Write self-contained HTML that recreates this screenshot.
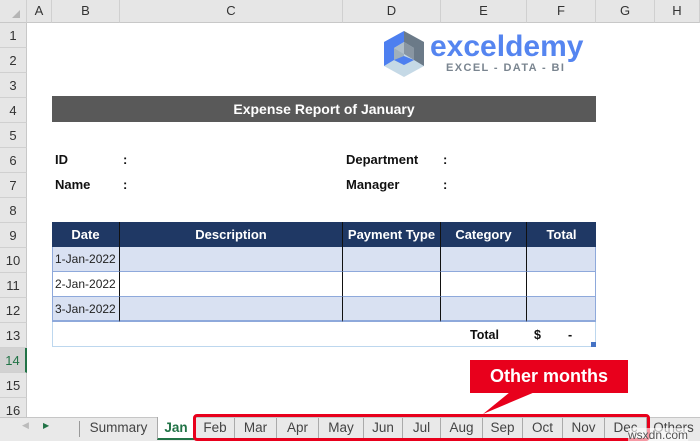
<!DOCTYPE html>
<html><head><meta charset="utf-8"><style>
*{margin:0;padding:0;box-sizing:border-box}
body{width:700px;height:441px;overflow:hidden;background:#fff;font-family:"Liberation Sans",Arial,sans-serif;position:relative}
.a{position:absolute}
.ch{top:0;height:23px;background:#e6e6e6;border-bottom:1px solid #c8c8c8;border-right:1px solid #d0d0d0;font-size:13px;color:#333;text-align:center;line-height:22px}
.rh{left:0;width:27px;height:25px;background:#e6e6e6;border-bottom:1px solid #d0d0d0;border-right:1px solid #c8c8c8;font-size:13px;color:#333;text-align:center;line-height:26px}
.b{font-weight:bold;font-size:13px;color:#111}
.cell{border-right:1px solid #111;border-bottom:1px solid #8ea9db;height:25px;font-size:12px;line-height:25px;padding-left:3px;color:#222}
.hd{color:#fff;font-weight:bold;font-size:13px;text-align:center;line-height:25px;height:25px;border-right:1px solid #111}
.tab{top:418px;height:23px;font-size:13.5px;color:#444;text-align:center;line-height:20px;border-left:1px solid #aaa}
</style></head><body>
<div class="a" style="left:0;top:0;width:2px;height:441px;background:#217346"></div>
<div class="a ch" style="left:0;width:27px"><svg width="27" height="22"><polygon points="20,10 20,18 12,18" fill="#b5b5b5"/></svg></div>
<div class="a ch" style="left:27px;width:25px">A</div>
<div class="a ch" style="left:52px;width:68px">B</div>
<div class="a ch" style="left:120px;width:223px">C</div>
<div class="a ch" style="left:343px;width:98px">D</div>
<div class="a ch" style="left:441px;width:86px">E</div>
<div class="a ch" style="left:527px;width:69px">F</div>
<div class="a ch" style="left:596px;width:59px">G</div>
<div class="a ch" style="left:655px;width:45px">H</div>
<div class="a rh" style="top:23px">1</div>
<div class="a rh" style="top:48px">2</div>
<div class="a rh" style="top:73px">3</div>
<div class="a rh" style="top:98px">4</div>
<div class="a rh" style="top:123px">5</div>
<div class="a rh" style="top:148px">6</div>
<div class="a rh" style="top:173px">7</div>
<div class="a rh" style="top:198px">8</div>
<div class="a rh" style="top:223px">9</div>
<div class="a rh" style="top:248px">10</div>
<div class="a rh" style="top:273px">11</div>
<div class="a rh" style="top:298px">12</div>
<div class="a rh" style="top:323px">13</div>
<div class="a rh" style="top:348px;background:#d2d2d2;color:#217346;border-right:2px solid #217346">14</div>
<div class="a rh" style="top:373px">15</div>
<div class="a rh" style="top:398px">16</div>

<svg class="a" style="left:382px;top:30px" width="44" height="48" viewBox="0 0 44 48">
<polygon points="22,1 42,12 42,36 22,47 2,36 2,12" fill="#c5d9e6"/>
<polygon points="22,1 2,12 2,36 12,30 12,18 22,12" fill="#4d7ff0"/>
<polygon points="22,1 42,12 42,36 32,30 32,18 22,12" fill="#6b7a88"/>
<polygon points="22,12 32,18 32,30 22,24" fill="#8996a2"/>
<polygon points="22,12 12,18 22,24" fill="#b0bec8"/>
<polygon points="12,18 22,24 22,35 12,30" fill="#9fb0bc"/>
<polygon points="12,30 22,35 32,30 22,26" fill="#4d7ff0"/>
</svg>
<div class="a" style="left:430px;top:28px;font-size:30px;font-weight:bold;color:#5585f0;line-height:38px">exceldemy</div>
<div class="a" style="left:446px;top:62px;font-size:11px;font-weight:bold;color:#7a8590;letter-spacing:1.4px">EXCEL - DATA - BI</div>

<div class="a" style="left:52px;top:96px;width:544px;height:26px;background:#595959;color:#fff;font-weight:bold;font-size:14px;text-align:center;line-height:26px">Expense Report of January</div>

<div class="a b" style="left:55px;top:152px">ID</div>
<div class="a b" style="left:123px;top:152px">:</div>
<div class="a b" style="left:55px;top:177px">Name</div>
<div class="a b" style="left:123px;top:177px">:</div>
<div class="a b" style="left:346px;top:152px">Department</div>
<div class="a b" style="left:443px;top:152px">:</div>
<div class="a b" style="left:346px;top:177px">Manager</div>
<div class="a b" style="left:443px;top:177px">:</div>

<div class="a" style="left:52px;top:222px;width:544px;height:25px;background:#1f3864"></div>
<div class="a hd" style="left:52px;top:222px;width:68px">Date</div>
<div class="a hd" style="left:120px;top:222px;width:223px">Description</div>
<div class="a hd" style="left:343px;top:222px;width:98px">Payment Type</div>
<div class="a hd" style="left:441px;top:222px;width:86px">Category</div>
<div class="a hd" style="left:527px;top:222px;width:69px;border-right:none">Total</div>

<div class="a" style="left:52px;top:247px;width:544px;height:25px;background:#d9e1f2"></div>
<div class="a" style="left:52px;top:297px;width:544px;height:25px;background:#d9e1f2"></div>
<div class="a" style="left:52px;top:247px;width:544px;height:75px;border-left:1px solid #8ea9db;border-right:1px solid #8ea9db"></div>
<div class="a cell" style="left:52px;top:247px;width:68px">1-Jan-2022</div>
<div class="a cell" style="left:52px;top:272px;width:68px">2-Jan-2022</div>
<div class="a cell" style="left:52px;top:297px;width:68px;border-bottom:2px solid #8ea9db">3-Jan-2022</div>
<div class="a cell" style="left:120px;top:247px;width:223px"></div>
<div class="a cell" style="left:120px;top:272px;width:223px"></div>
<div class="a cell" style="left:120px;top:297px;width:223px;border-bottom:2px solid #8ea9db"></div>
<div class="a cell" style="left:343px;top:247px;width:98px"></div>
<div class="a cell" style="left:343px;top:272px;width:98px"></div>
<div class="a cell" style="left:343px;top:297px;width:98px;border-bottom:2px solid #8ea9db"></div>
<div class="a cell" style="left:441px;top:247px;width:86px"></div>
<div class="a cell" style="left:441px;top:272px;width:86px"></div>
<div class="a cell" style="left:441px;top:297px;width:86px;border-bottom:2px solid #8ea9db"></div>
<div class="a cell" style="left:527px;top:247px;width:69px;border-right:1px solid #8ea9db"></div>
<div class="a cell" style="left:527px;top:272px;width:69px;border-right:1px solid #8ea9db"></div>
<div class="a cell" style="left:527px;top:297px;width:69px;border-right:1px solid #8ea9db;border-bottom:2px solid #8ea9db"></div>
<div class="a" style="left:52px;top:322px;width:544px;height:25px;border:1px solid #bdd7ee;border-top:none"></div>
<div class="a b" style="left:470px;top:328px;font-size:12.5px">Total</div>
<div class="a b" style="left:534px;top:328px;font-size:12.5px">$</div>
<div class="a b" style="left:568px;top:328px;font-size:12.5px">-</div>
<div class="a" style="left:591px;top:342px;width:5px;height:5px;background:#4472c4"></div>

<svg class="a" style="left:465px;top:358px" width="170" height="58">
<rect x="5" y="2" width="158" height="33" fill="#e8001c"/>
<polygon points="45,34 70,34 18,56" fill="#e8001c"/>
</svg>
<div class="a" style="left:470px;top:360px;width:158px;height:33px;color:#fff;font-weight:bold;font-size:18px;text-align:center;line-height:32px">Other months</div>

<div class="a" style="left:0;top:417px;width:700px;height:24px;background:#e9e9e9;border-top:1px solid #c6c6c6"></div>
<div class="a" style="left:22px;top:420px;font-size:9px;color:#bbb">◀</div>
<div class="a" style="left:43px;top:421px;font-size:8px;color:#217346">▶</div>
<div class="a" style="left:79px;top:421px;width:1px;height:16px;background:#999"></div>
<div class="a tab" style="left:80px;width:77px;border-left:none">Summary</div>
<div class="a tab" style="left:157px;width:37px;background:#fff;color:#217346;font-weight:bold;border-bottom:2px solid #217346;top:417px;line-height:22px">Jan</div>
<div class="a tab" style="left:196px;width:38px;border-left:none">Feb</div>
<div class="a tab" style="left:234px;width:42px">Mar</div>
<div class="a tab" style="left:276px;width:42px">Apr</div>
<div class="a tab" style="left:318px;width:45px">May</div>
<div class="a tab" style="left:363px;width:39px">Jun</div>
<div class="a tab" style="left:402px;width:38px">Jul</div>
<div class="a tab" style="left:440px;width:42px">Aug</div>
<div class="a tab" style="left:482px;width:40px">Sep</div>
<div class="a tab" style="left:522px;width:40px">Oct</div>
<div class="a tab" style="left:562px;width:42px">Nov</div>
<div class="a tab" style="left:604px;width:42px">Dec</div>
<div class="a tab" style="left:646px;width:54px">Others</div>
<div class="a" style="left:193px;top:414px;width:457px;height:27px;border:3px solid #e8001c;border-radius:4px"></div>
<div class="a" style="left:628px;top:428px;font-size:12px;color:#555;background:rgba(255,255,255,0.6)">wsxdn.com</div>
</body></html>
